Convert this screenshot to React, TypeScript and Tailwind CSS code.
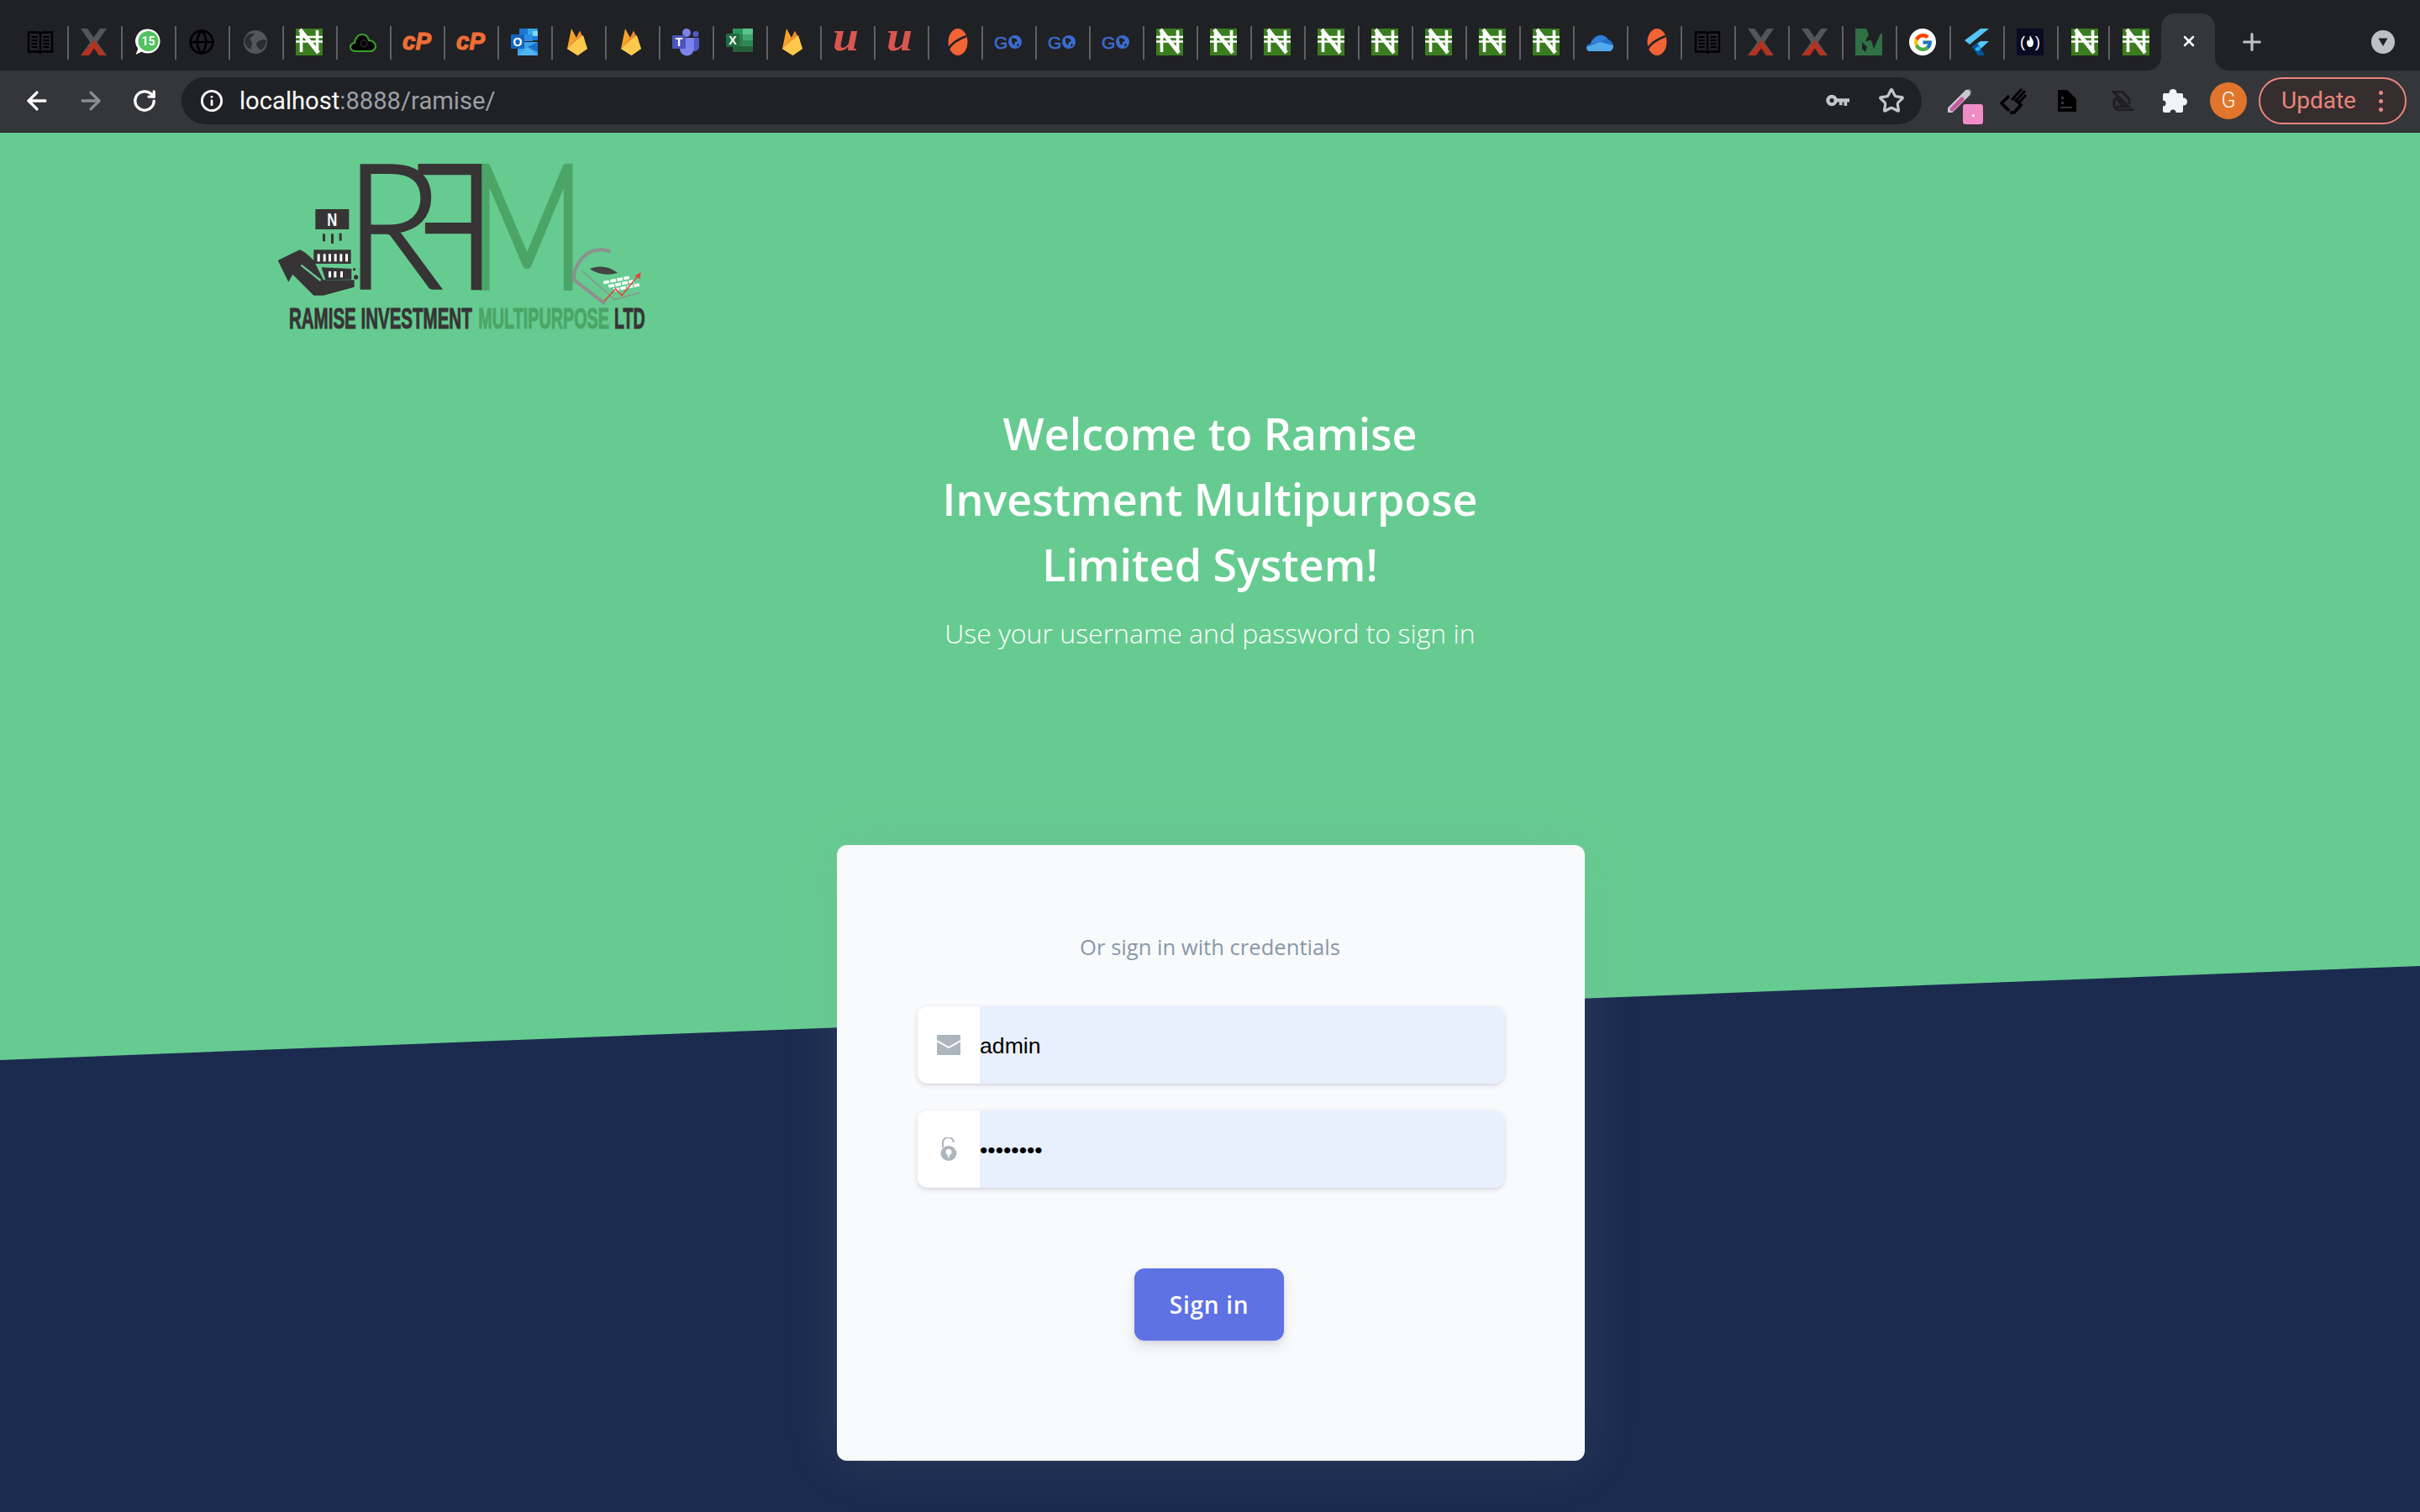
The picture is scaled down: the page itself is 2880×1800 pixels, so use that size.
import React from "react";
import { ArrowLeft, ArrowRight, RotateCw, Info, Star, Plus, X, Globe } from "lucide-react";
import { FcGoogle } from "react-icons/fc";

const S = ({ children }: { children: React.ReactNode }) => (
  <svg viewBox="0 0 32 32" className="w-[32px] h-[32px] block overflow-visible">{children}</svg>
);

const Book = () => (
  <S>
    <path d="M2 4.500h11c1.600 0 3 1 3 2 0-1 1.400-2 3-2h11v23H18l-2 1.500-2-1.500H2z" fill="none" stroke="#000" strokeWidth="2.400" />
    <path d="M16 6v21" stroke="#000" strokeWidth="2" />
    <path d="M5.500 10h7M5.500 14h7M5.500 18h7M5.500 22h7M19.500 10h7M19.500 14h7M19.500 18h7M19.500 22h7" stroke="#000" strokeWidth="2" />
  </S>
);
const XLogo = () => (
  <S>
    <polygon points="0,0 8,0 31,32 22,32" fill="#55565a" />
    <polygon points="31,0 23,0 0,32 9,32" fill="#55565a" />
    <polygon points="16,13.500 21,20.500 30,32 22,32 16,23.500 10,32 0,32 11,20.500" fill="#b53120" />
  </S>
);
const Whats = () => (
  <S>
    <path d="M16 .5a14.500 14.500 0 1 1-7.500 26.900L1.500 31l2.800-7A14.500 14.500 0 0 1 16 .5z" fill="#fff" />
    <circle cx="16.500" cy="15" r="12" fill="#4fc35f" />
    <text x="16.500" y="20" textAnchor="middle" fontSize="14" fontWeight="700" fill="#fff" fontFamily="Roboto, sans-serif">15</text>
  </S>
);
const GlobeIcon = () => <Globe size={32} color="#000" strokeWidth={2} />;
const Earth = () => (
  <S>
    <circle cx="16" cy="16" r="14" fill="#55565a" />
    <path d="M5 9c4-3 7-4 10-3-1 3-4 3-5 6-1 2 2 3 2 5 0 3-2 5-1 8-4-1-8-6-8-10 0-2 1-4 2-6zM20 15c3-2 6-2 9-1 0 5-3 10-7 12-2-3-5-5-5-7 0-2 1-3 3-4z" fill="#202124" opacity=".75" />
  </S>
);
const Naira = () => (
  <S>
    <rect width="32" height="32" fill="#3a7d1f" />
    <path d="M6.500 2v26M25.500 2v26" stroke="#fff" strokeWidth="3.600" />
    <path d="M5 1 27 29" stroke="#fff" strokeWidth="4.500" />
    <path d="M0 10h32M0 15.500h32" stroke="#fff" strokeWidth="2.400" />
  </S>
);
const CloudGreen = () => (
  <S>
    <path d="M8 27c-4 0-7-2-7-5 0-3 3-5 5-5 0-3 3-10 9-10 4 0 7 3 8 7 4 0 8 3 8 7 0 3-3 6-6 6z" fill="#000" stroke="#3e9c2f" strokeWidth="2.200" />
    <circle cx="17" cy="18" r="4" fill="none" stroke="#2a2a2a" strokeWidth="1.500" />
  </S>
);
const CP = () => (
  <svg viewBox="0 0 32 32" className="w-[32px] h-[32px] block overflow-visible">
    <text x="-1" y="25" fontSize="29" fontWeight="700" fontStyle="italic" fill="#ee6e36" fontFamily="Liberation Sans, sans-serif" textLength="34" lengthAdjust="spacingAndGlyphs" stroke="#ee6e36" strokeWidth="1.200">cP</text>
  </svg>
);
const Outlook = () => (
  <S>
    <rect x="10" y="0" width="22" height="14" fill="#1d78cf" />
    <rect x="20" y="0" width="11" height="7" fill="#35a8ea" />
    <rect x="26" y="3" width="6" height="6" fill="#7ed3fb" />
    <rect x="15" y="7" width="11" height="8" fill="#2c8ee0" />
    <polygon points="8,16 32,16 32,32 8,32" fill="#3aa3ea" />
    <polygon points="32,16 32,28 20,22" fill="#1a72c4" />
    <polygon points="8,32 20,22 32,32" fill="#52b4f0" />
    <rect x="0" y="7" width="16" height="17" rx="1" fill="#1565c0" />
    <text x="8" y="21" textAnchor="middle" fontSize="14" fontWeight="700" fill="#fff" fontFamily="Liberation Sans, sans-serif">O</text>
  </S>
);
const Firebase = () => (
  <S>
    <polygon points="3,24 8,0 14,11 18,3 27,24 15.500,32" fill="#f6a22a" />
    <polygon points="14,11 18,3 24,14 21,18 3,24" fill="#ee8a2c" />
    <polygon points="3,24 14,14 22,8 27,24 15.500,32" fill="#fcc94d" />
  </S>
);
const Teams = () => (
  <S>
    <circle cx="17" cy="5" r="5" fill="#7b83eb" />
    <circle cx="28" cy="6.500" r="3.500" fill="#5059c9" />
    <path d="M22 11h10v11c0 3-3 5-6 5z" fill="#5059c9" />
    <path d="M9 11h17v13a8.500 8.500 0 0 1-17 0z" fill="#7b83eb" />
    <rect x="0" y="8" width="16" height="16" rx="1" fill="#4b53bc" />
    <text x="8" y="21" textAnchor="middle" fontSize="14" fontWeight="700" fill="#fff" fontFamily="Liberation Sans, sans-serif">T</text>
  </S>
);
const Excel = () => (
  <S>
    <rect x="8" y="0" width="24" height="28" fill="#2e7d4f" />
    <rect x="20" y="0" width="12" height="7" fill="#5fc389" />
    <rect x="8" y="0" width="12" height="7" fill="#2b9560" />
    <rect x="20" y="7" width="12" height="7" fill="#3fa870" />
    <rect x="20" y="14" width="12" height="7" fill="#2e8a59" />
    <rect x="8" y="21" width="24" height="7" fill="#245f3a" />
    <rect x="0" y="6" width="16" height="16" rx="1" fill="#1f6b3e" />
    <text x="8" y="19" textAnchor="middle" fontSize="14" fontWeight="700" fill="#fff" fontFamily="Liberation Sans, sans-serif">X</text>
  </S>
);
const Udemy = () => (
  <svg viewBox="0 0 32 32" className="w-[32px] h-[32px] block overflow-visible">
    <text x="-1" y="26" fontSize="50" fontStyle="italic" fontWeight="700" fill="#d95650" fontFamily="Liberation Serif, serif" textLength="31" lengthAdjust="spacingAndGlyphs">u</text>
  </svg>
);
const Orange = () => (
  <S>
    <path d="M10 0C3 4 0 10 0 16s3 12 10 16C5 26 4 6 10 0z" fill="#1b2336" />
    <ellipse cx="20" cy="16" rx="11.500" ry="16" fill="#f26335" />
    <path d="M9 24Q14 15 30 9" fill="none" stroke="#202124" strokeWidth="2.600" />
  </S>
);
const Go = () => (
  <S>
    <text x="-1" y="23.500" fontSize="21" fontWeight="400" fill="#3a6cd0" fontFamily="Liberation Sans, sans-serif" stroke="#3a6cd0" strokeWidth=".6">G</text>
    <circle cx="24" cy="16" r="8" fill="#3a6cd0" />
    <path d="M20 11l5 1 2 3-3 1-1 4-2-2-1-3zM26 19l2-1 1 1-2 3z" fill="#202124" />
  </S>
);
const OneDrive = () => (
  <S>
    <path d="M4 27a4 4 0 0 1-4-4c0-3 2-5 5-5 1-4 6-10 12-10 4 0 7 2 9 5 3 1 6 4 6 8 0 3-2 6-5 6z" fill="#1f72c9" />
    <path d="M5 18c1-4 6-10 12-10 3 0 6 1 8 4L13 17z" fill="#2f7fd6" />
    <path d="M0 22 16 16l16 4c0 4-2 7-5 7H4c-2 0-4-2-4-5z" fill="#53a9ea" />
  </S>
);
const WLogo = () => (
  <S>
    <polygon points="0,0 13,0 16,7 12,15 19,14 22,24 30,6 32,6 32,32 0,32" fill="#2f7045" />
    <polygon points="8,16 8,24 12,28 14,22" fill="#202124" />
  </S>
);
const Goog = () => (
  <div className="w-[32px] h-[32px] rounded-full bg-white flex items-center justify-center">
    <FcGoogle size={25} />
  </div>
);
const Flutter = () => (
  <S>
    <polygon points="21,0 31,0 8,19 2,14" fill="#54c5f8" />
    <polygon points="21,15 31,15 18,27 11,22" fill="#54c5f8" />
    <polygon points="11,22 17,17 26,32 18,32" fill="#01579b" />
    <polygon points="14,25 18,21 21,24 18,27" fill="#29b6f6" />
  </S>
);
const Fcc = () => (
  <S>
    <rect width="32" height="32" fill="#0a0a23" />
    <text x="4" y="22" fontSize="18" fill="#fff" fontFamily="Liberation Sans, sans-serif">(</text>
    <text x="22" y="22" fontSize="18" fill="#fff" fontFamily="Liberation Sans, sans-serif">)</text>
    <path d="M16 8c1 3 4 5 4 9 0 3-2 5-4 5s-4-2-4-5c0-2 1-3 2-4 0 1 1 2 1 2 1-2 0-5 1-7z" fill="#fff" />
  </S>
);

const icons: React.ComponentType[] = [
  Book, XLogo, Whats, GlobeIcon, Earth, Naira, CloudGreen, CP, CP, Outlook, Firebase, Firebase, Teams, Excel, Firebase,
  Udemy, Udemy, Orange, Go, Go, Go, Naira, Naira, Naira, Naira, Naira, Naira, Naira, Naira, OneDrive, Orange, Book,
  XLogo, XLogo, WLogo, Goog, Flutter, Fcc,
];

function TabStrip() {
  return (
    <div className="h-[84px] shrink-0 bg-[#202124] flex pl-[18px]">
      {icons.map((I, i) => (
        <div key={i} className="w-[64px] h-[40px] mt-[31px] pl-[14px] pt-[3px] border-r-2 border-[#5f6063] shrink-0">
          <I />
        </div>
      ))}
      <div className="w-[61px] h-[40px] mt-[31px] pl-[15px] pt-[3px] border-r-2 border-[#5f6063] shrink-0">
        <Naira />
      </div>
      <div className="w-[61px] h-[40px] mt-[31px] pl-[15px] pt-[3px] shrink-0">
        <Naira />
      </div>
      <div className="relative w-[64px] h-[68px] mt-[16px] bg-[#35363a] rounded-t-[16px] flex items-center justify-center pb-[2px] pl-[2px] shrink-0">
        <X size={20} color="#fff" strokeWidth={3} />
        <div className="absolute -left-[16px] bottom-0 w-[16px] h-[16px] bg-[radial-gradient(circle_at_0_0,transparent_15.500px,#35363a_16px)]" />
        <div className="absolute -right-[16px] bottom-0 w-[16px] h-[16px] bg-[radial-gradient(circle_at_100%_0,transparent_15.500px,#35363a_16px)]" />
      </div>
      <div className="ml-[26px] mt-[32px] w-[36px] h-[36px] flex items-center justify-center">
        <Plus size={32} color="#bdc1c6" strokeWidth={2.4} />
      </div>
      <div className="ml-[124px] mt-[36px] w-[28px] h-[28px] rounded-full bg-[#bdc1c6] flex items-center justify-center">
        <svg viewBox="0 0 14 14" className="w-[14px] h-[14px]">
          <polygon points="1.500,2.500 12.500,2.500 7,12" fill="#202124" />
        </svg>
      </div>
    </div>
  );
}

function Toolbar() {
  return (
    <div className="h-[74px] shrink-0 bg-[#35363a] border-b-2 border-[#2a2b2e] flex items-start pt-[8px]">
      <div className="w-[216px] shrink-0 h-[56px] flex items-center pl-[12px]">
        <div className="w-[64px] flex justify-center">
          <ArrowLeft size={34} color="#fff" strokeWidth={2.3} />
        </div>
        <div className="w-[64px] flex justify-center">
          <ArrowRight size={34} color="#8c8d8f" strokeWidth={2.3} />
        </div>
        <div className="w-[64px] flex justify-center">
          <RotateCw size={30} color="#fff" strokeWidth={2.6} />
        </div>
      </div>
      <div className="w-[2071px] shrink-0 h-[56px] rounded-full bg-[#202124] flex items-center pl-[22px] pr-[20px]">
        <Info size={28} color="#fff" strokeWidth={2.4} />
        <div className="ml-[19px] pt-[1px] text-[29.200px] font-['Roboto',sans-serif] text-white leading-none">
          localhost<span className="text-[#9aa0a6]">:8888/ramise/</span>
        </div>
        <div className="ml-auto flex items-center">
          <svg viewBox="0 0 30 16" className="w-[28px] h-[15px]">
            <circle cx="7.500" cy="7" r="5" fill="none" stroke="#c4c7c9" strokeWidth="4.500" />
            <path d="M12 4.500h18v4.500h-3v5h-4V9h-2v4h-4V9h-5z" fill="#c4c7c9" />
          </svg>
          <div className="ml-[34px]">
            <Star size={32} color="#c4c7c9" strokeWidth={2.4} />
          </div>
        </div>
      </div>
      <div className="w-[66px] h-[56px] shrink-0 relative pl-[31px] pt-[14px]">
        <svg viewBox="0 0 30 28" className="w-[30px] h-[28px]">
          <path d="M27 1 22 6" stroke="#77787a" strokeWidth="5" />
          <path d="M23 5 3 25" stroke="#c9cacc" strokeWidth="8" strokeLinecap="round" />
          <path d="M17 12 5 24" stroke="#c85aa4" strokeWidth="5" strokeLinecap="round" />
        </svg>
        <div className="absolute left-[49px] top-[32px] w-[24px] h-[24px] rounded-[3px] bg-[#f08cc8] flex items-center justify-center pt-[2px]">
          <div className="w-[3px] h-[3px] bg-white rounded-full" />
        </div>
      </div>
      <div className="ml-[27px] mt-[12px] shrink-0">
        <svg viewBox="0 0 32 32" className="w-[32px] h-[32px]">
          <path d="M11 10 2 19l9 9M18 14l7 7-8 9h-5" fill="none" stroke="#000" strokeWidth="3.500" />
          <path d="M14 15 26 2M18 17 30 4M22 19 31 9" stroke="#000" strokeWidth="3" />
        </svg>
      </div>
      <div className="ml-[37px] mt-[15px] shrink-0">
        <svg viewBox="0 0 22 26" className="w-[22px] h-[26px]">
          <path d="M0 0h11l11 11v15H0z" fill="#000" />
          <path d="M4 8h3v3H4zM4 14h3v3H4zM3 20h14v2H3z" fill="#35363a" />
        </svg>
      </div>
      <div className="ml-[39px] mt-[16px] shrink-0">
        <svg viewBox="0 0 30 24" className="w-[30px] h-[24px]">
          <path d="M3 1h12l9 9v6M5 1l18 18H9M7 8l12 12M6 10v9l4 4h19" fill="none" stroke="#1e1e20" strokeWidth="3" />
        </svg>
      </div>
      <div className="ml-[34px] mt-[14px] shrink-0">
        <svg viewBox="0 0 29 28" className="w-[29px] h-[28px]">
          <rect x="0" y="5" width="24" height="23" rx="2" fill="#f1f3f4" />
          <circle cx="12" cy="4.500" r="4.500" fill="#f1f3f4" />
          <circle cx="24.500" cy="15" r="4.500" fill="#f1f3f4" />
          <circle cx="12" cy="28" r="3.500" fill="#35363a" />
          <circle cx="0" cy="17" r="3.500" fill="#35363a" />
        </svg>
      </div>
      <div className="ml-[27px] mt-[6px] w-[44px] h-[44px] rounded-full bg-[#e0752b] text-white text-[25px] font-['Roboto',sans-serif] font-light flex items-center justify-center shrink-0">
        G
      </div>
      <div className="ml-[14px] w-[176px] h-[56px] shrink-0 rounded-full border-2 border-[#e8877d] bg-[#352d2e] flex items-center pl-[25px] text-[#e8857c] text-[28px] font-['Roboto',sans-serif]">
        Update
        <div className="ml-[27px] flex flex-col gap-[5px]">
          <div className="w-[5px] h-[5px] rounded-full bg-[#e8857c]" />
          <div className="w-[5px] h-[5px] rounded-full bg-[#e8857c]" />
          <div className="w-[5px] h-[5px] rounded-full bg-[#e8857c]" />
        </div>
      </div>
    </div>
  );
}

const keys: [number, number][] = [];
for (let r = 0; r < 3; r++) for (let c = 0; c < 4; c++) keys.push([1224 + c * 24 + r * 18, 494 - c * 5 + r * 13]);

function Logo() {
  const dark = "#363435";
  const green = "#4ba566";
  const fam = "Lato, sans-serif";
  return (
    <svg viewBox="0 0 1440 720" className="w-[480px] h-[240px] block ml-[310px] mt-[12px]">
      <text x="744" y="518" fontSize="618" fontWeight="300" fill={green} fontFamily={fam} textLength="412" lengthAdjust="spacingAndGlyphs" stroke={green} strokeWidth="16">M</text>
      <text x="300" y="518" fontSize="618" fontWeight="300" fill={dark} fontFamily={fam} textLength="350" lengthAdjust="spacingAndGlyphs" stroke={dark} strokeWidth="10">R</text>
      <g transform="translate(1362 0) scale(-1 1)">
        <text x="525" y="518" fontSize="618" fontWeight="300" fill={dark} fontFamily={fam} textLength="287" lengthAdjust="spacingAndGlyphs" stroke={dark} strokeWidth="14">F</text>
      </g>
      <rect x="196" y="237" width="120" height="72" fill={dark} />
      <text x="256" y="298" textAnchor="middle" fontSize="66" fontWeight="700" fill="#fff" fontFamily="Liberation Sans, sans-serif" textLength="36" lengthAdjust="spacingAndGlyphs">N</text>
      <rect x="222" y="325" width="9" height="27" fill={dark} />
      <rect x="252" y="325" width="9" height="35" fill={dark} />
      <rect x="281" y="323" width="9" height="27" fill={dark} />
      <rect x="190" y="382" width="133" height="50" fill={dark} />
      {[203, 224, 243, 263, 283, 303].map((x) => (
        <rect key={x} x={x} y="397" width="9" height="27" fill="#fff" />
      ))}
      <polygon points="218,445 325,450 325,488 232,490" fill={dark} />
      {[243, 262, 285].map((x) => (
        <rect key={x} x={x} y="459" width="9" height="22" fill="#fff" />
      ))}
      <circle cx="335" cy="452" r="5" fill={dark} />
      <circle cx="341" cy="480" r="8" fill={dark} />
      <path d="M62 420 140 382q15 3 50 38l35 70h110v25l-110 30h-35L115 470l-15 27z" fill={dark} />
      <path d="M145 437l70 55" stroke="#66cb90" strokeWidth="7" fill="none" />
      <path d="M1250 388q-60-20-100 22-35 40-30 80l110 85" stroke="#8f8f8f" strokeWidth="12" fill="none" />
      <path d="M1145 455l120 105 90-25" stroke="#8f8f8f" strokeWidth="4" fill="none" />
      <path d="M1175 450q55-20 100 15-55 15-100-15z" fill="#444" />
      {keys.map(([x, y], i) => (
        <rect key={i} x={x} y={y} width="20" height="11" fill="#fff" transform={`rotate(-10 ${x} ${y})`} />
      ))}
      <path d="M1228 565l40-43 22 23 58-70" stroke="#e0483e" strokeWidth="5" fill="none" />
      <polygon points="1358,463 1355,487 1337,474" fill="#e0483e" />
      <g fontFamily="Liberation Sans, sans-serif" fontWeight="700" fontSize="104">
        <text x="102" y="663" fill={dark} stroke={dark} strokeWidth="3" textLength="653" lengthAdjust="spacingAndGlyphs">RAMISE INVESTMENT</text>
        <text x="778" y="663" fill={green} stroke={green} strokeWidth="3" textLength="467" lengthAdjust="spacingAndGlyphs">MULTIPURPOSE</text>
        <text x="1263" y="663" fill={dark} stroke={dark} strokeWidth="3" textLength="110" lengthAdjust="spacingAndGlyphs">LTD</text>
      </g>
    </svg>
  );
}

function Field({ icon, type, value }: { icon: React.ReactNode; type: string; value: string }) {
  return (
    <div className="h-[92px] rounded-[12px] bg-white flex overflow-hidden shadow-[0_2px_6px_rgba(50,50,93,0.15),0_2px_2px_rgba(0,0,0,0.04)]">
      <div className="w-[74px] shrink-0 flex items-center justify-center">{icon}</div>
      <input
        type={type}
        value={value}
        readOnly
        className="flex-1 min-w-0 h-full pt-[2px] bg-[#e8f0fe] outline-none text-black text-[26.670px] font-['Liberation_Sans',sans-serif]"
      />
    </div>
  );
}

export default function App() {
  return (
    <div className="w-[2880px] h-[1800px] flex flex-col overflow-hidden font-['Open_Sans',sans-serif]">
      <TabStrip />
      <Toolbar />
      <main className="relative flex-1 bg-[#1b2b4f]">
        <div className="absolute inset-0 bg-[#66cb90] [clip-path:polygon(0_0,100%_0,100%_992px,0_1104px)]" />
        <div className="relative">
          <Logo />
          <div className="mt-[67px] text-center text-white">
            <h1 className="text-[52px] leading-[78px] font-semibold">
              Welcome to Ramise
              <br />
              Investment Multipurpose
              <br />
              Limited System!
            </h1>
            <p className="mt-[19px] text-[32px] leading-[48px] font-light">Use your username and password to sign in</p>
          </div>
          <div className="ml-[996px] mt-[228px] w-[890px] h-[733px] bg-[#f9fafc] rounded-[12px] shadow-[0_0_64px_rgba(136,152,170,0.15)] px-[96px] pt-[102px]">
            <div className="h-[40px] leading-[40px] text-center text-[25.600px] text-[#8898aa] pr-[2px]">Or sign in with credentials</div>
            <div className="mt-[50px] flex flex-col gap-[32px]">
              <Field
                type="text"
                value="admin"
                icon={
                  <svg viewBox="0 0 28 24" className="w-[28px] h-[24px]">
                    <rect width="28" height="24" rx="1" fill="#adb5bd" />
                    <path d="M0 7l14 8 14-8" fill="none" stroke="#fff" strokeWidth="2" />
                  </svg>
                }
              />
              <Field
                type="password"
                value="password"
                icon={
                  <svg viewBox="0 0 20 28" className="w-[20px] h-[28px]">
                    <path d="M3 12V7a6.500 6.500 0 0 1 13-1" fill="none" stroke="#adb5bd" strokeWidth="2" />
                    <ellipse cx="10" cy="19" rx="9.500" ry="9" fill="#adb5bd" />
                    <circle cx="10" cy="17.500" r="3.500" fill="#fff" />
                    <path d="M9 19h2v5H9z" fill="#fff" />
                  </svg>
                }
              />
            </div>
            <div className="mt-[96px] flex justify-center pr-[4px]">
              <button className="w-[178px] h-[86px] rounded-[12px] bg-[#5e72e4] text-white text-[28px] font-semibold tracking-[0.7px] shadow-[0_8px_16px_rgba(50,50,93,0.11),0_2px_6px_rgba(0,0,0,0.08)]">
                Sign in
              </button>
            </div>
          </div>
        </div>
      </main>
    </div>
  );
}
